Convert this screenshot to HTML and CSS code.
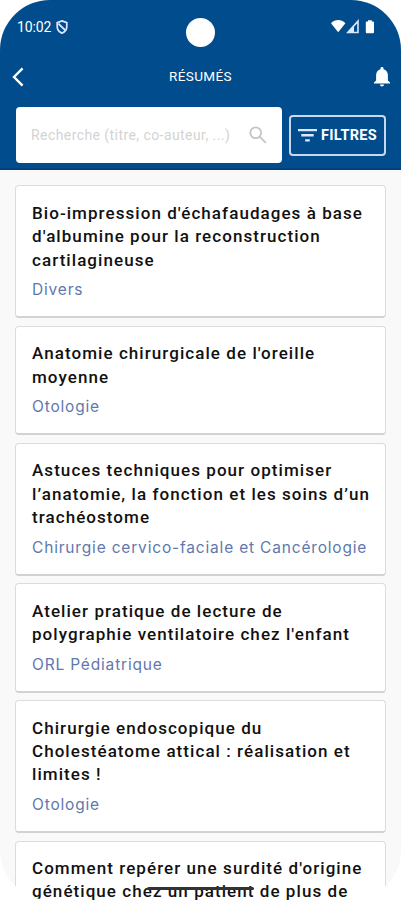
FILE: index.html
```html
<!DOCTYPE html>
<html lang="fr">

<head>
	<meta charset="utf-8">
	<title>Résumés</title>
	<link rel="stylesheet" href="styles.css">
</head>

<body>
	<div class="phone">
		<header class="header">
			<div class="status">
				<span class="time">10:02</span>
				<svg class="shield" width="12" height="14" viewBox="0 0 12 14">
					<path d="M6 .9 10.8 2.7V6.5C10.8 9.6 8.8 12 6 13.1 3.2 12 1.2 9.6 1.2 6.5V2.7Z" fill="none" stroke="#dce8ff" stroke-width="1.7" />
					<path d="M2.4 3.6 9.6 10.6" stroke="#dce8ff" stroke-width="2" />
				</svg>
				<svg class="signals" width="46" height="16" viewBox="0 0 46 16">
					<path d="M1 4.2C5-.1 11.4-.1 15.4 4.2L8.2 13.2Z" fill="#fff" />
					<path d="M28 2.200V13.500H17.800Z" fill="none" stroke="#dce8ff" stroke-width="1.600" />
					<path d="M24 7V13.500H17.800Z" fill="#dce8ff" />
					<path d="M38 1.200h3.800v1.300h1.200q1 0 1 1v9.800q0 1-1 1h-6.200q-1 0-1-1V3.500q0-1 1-1H38Z" fill="#fff" />
				</svg>
				<div class="camera"></div>
			</div>
			<div class="navbar">
				<svg class="back" width="12" height="20" viewBox="0 0 12 20">
					<path d="M10.600 1.300 2 10l8.600 8.700" fill="none" stroke="#fff" stroke-width="2.400" />
				</svg>
				<h1 class="page-title">RÉSUMÉS</h1>
				<svg class="bell" width="16" height="20" viewBox="0 0 16 20">
					<path d="M8 0C7.100 0 6.500.7 6.500 1.500V2.200C3.600 2.900 2.100 5.300 2.100 8.200V13.400L0 15.500V16.600H16V15.500L13.900 13.400V8.200C13.900 5.300 12.400 2.900 9.500 2.200V1.500C9.500.7 8.900 0 8 0ZM6 17.600C6 18.800 6.900 19.600 8 19.600S10 18.800 10 17.600Z" fill="#fff" />
				</svg>
			</div>
			<div class="toolbar">
				<div class="search">
					<span class="placeholder">Recherche (titre, co-auteur, ...)</span>
					<svg width="18" height="18" viewBox="0 0 18 18" fill="none" stroke="#c4c4c4" stroke-width="1.800">
						<circle cx="6.700" cy="6.700" r="5.400" />
						<path d="M10.700 10.700 16.800 16.800" />
					</svg>
				</div>
				<button class="filters" type="button">
					<svg width="19" height="13" viewBox="0 0 19 13" fill="#dce8ff">
						<path d="M0 0H19V2.300H0ZM3.300 5.100H15.700V7.400H3.300ZM7.200 10.200H11.800V12.500H7.200Z" />
					</svg>
					<span>FILTRES</span>
				</button>
			</div>
		</header>

		<main class="list">
			<article class="card">
				<h2>Bio-impression d'échafaudages à base<br>d'albumine pour la reconstruction<br>cartilagineuse</h2>
				<p>Divers</p>
			</article>
			<article class="card">
				<h2>Anatomie chirurgicale de l'oreille<br>moyenne</h2>
				<p>Otologie</p>
			</article>
			<article class="card">
				<h2>Astuces techniques pour optimiser<br>l’anatomie, la fonction et les soins d’un<br>trachéostome</h2>
				<p>Chirurgie cervico-faciale et Cancérologie</p>
			</article>
			<article class="card">
				<h2>Atelier pratique de lecture de<br>polygraphie ventilatoire chez l'enfant</h2>
				<p>ORL Pédiatrique</p>
			</article>
			<article class="card">
				<h2>Chirurgie endoscopique du<br>Cholestéatome attical : réalisation et<br>limites !</h2>
				<p>Otologie</p>
			</article>
			<article class="card">
				<h2>Comment repérer une surdité d'origine<br>génétique chez un patient de plus de</h2>
			</article>
		</main>
		<div class="home-bar"></div>
	</div>
</body>

</html>
```
FILE: styles.css
```css
body {
	margin: 0;
	background: #fff;
	font-family: Roboto, "Liberation Sans", sans-serif;
}

.phone {
	position: relative;
	height: 900px;
	overflow: hidden;
	border-radius: 50px;
	background: #f9f9f9;
}

.header {
	box-sizing: border-box;
	height: 170px;
	background: #004c8c;
	border-bottom: 2px solid #063f7d;
	color: #fff;
}

.status {
	position: relative;
	display: flex;
	align-items: center;
	height: 54px;
	padding: 0 25px 0 17px;
}

.time {
	width: 34px;
	font-size: 14px;
	line-height: 16px;
	letter-spacing: -0.1px;
}

.shield {
	margin-left: 5px;
}

.signals {
	margin-left: auto;
}

.camera {
	position: absolute;
	top: 18px;
	left: 186px;
	width: 29px;
	height: 29px;
	border-radius: 50%;
	background: #fff;
}

.navbar {
	display: flex;
	align-items: center;
	justify-content: space-between;
	height: 46px;
	padding: 0 11px 0 12px;
}

.page-title {
	margin: 0 0 2px 3px;
	font-size: 13.5px;
	font-weight: 400;
	letter-spacing: 0.4px;
}

.toolbar {
	display: flex;
	align-items: center;
	gap: 7px;
	padding: 7px 15px 0 16px;
}

.search {
	box-sizing: border-box;
	display: flex;
	align-items: center;
	justify-content: space-between;
	width: 266px;
	height: 56px;
	padding: 0 15px;
	border-radius: 4px;
	background: #fff;
}

.placeholder {
	color: #d3d3d3;
	font-size: 14px;
	letter-spacing: 0.43px;
	white-space: nowrap;
}

.filters {
	box-sizing: border-box;
	display: flex;
	align-items: center;
	justify-content: center;
	gap: 4px;
	width: 97px;
	height: 41px;
	padding: 0;
	border: 2px solid #c9d8f2;
	border-radius: 4px;
	background: none;
	color: #fff;
	font: 700 14.5px Roboto, sans-serif;
	letter-spacing: 0.3px;
}

.list {
	display: flex;
	flex-direction: column;
	gap: 7.4px;
	padding: 15.4px 15px 0;
}

.card {
	box-sizing: border-box;
	flex: none;
	padding: 15.4px 0 15.6px 16px;
	border: 1px solid #dcdcdc;
	border-bottom: 2px solid #d2d2d2;
	border-radius: 4px;
	background: #fff;
}

.card h2 {
	margin: 0;
	color: #111;
	font-size: 17px;
	font-weight: 500;
	line-height: 23.4px;
	letter-spacing: 1.06px;
	white-space: nowrap;
}

.card p {
	margin: 8.4px 0 0;
	color: #5f78ae;
	font-family: Inter, sans-serif;
	font-size: 15.5px;
	line-height: 20.4px;
	letter-spacing: 0.82px;
	white-space: nowrap;
}

.home-bar {
	position: absolute;
	left: 147px;
	bottom: 10px;
	width: 107px;
	height: 3px;
	border-radius: 2px;
	background: #333;
}
```
